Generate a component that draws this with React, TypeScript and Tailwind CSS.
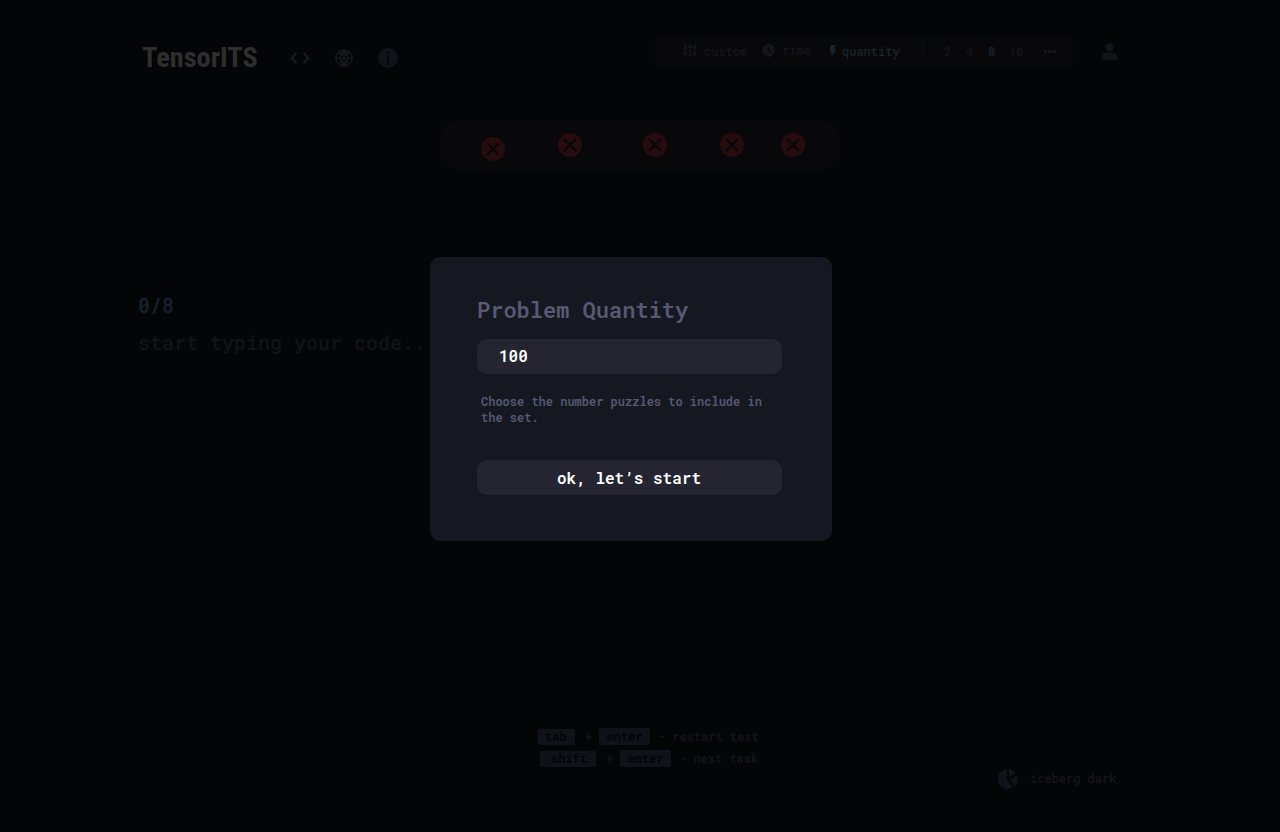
import React from "react";

const mono = "font-['Roboto_Mono','Liberation_Mono',monospace]";

function Key({ children, className }: { children: React.ReactNode; className: string }) {
  return <span className={`flex items-center justify-center rounded-[2px] bg-[#101219] text-[#030507] ${className}`}>{children}</span>;
}

function Wrong({ className }: { className: string }) {
  return (
    <svg className={`size-6 shrink-0 ${className}`} viewBox="0 0 24 24">
      <circle cx="12" cy="12" r="12" fill="#260c0f" />
      <path d="M6.5 6.5l11 11M17.5 6.5l-11 11" stroke="#070709" strokeWidth="2" strokeLinecap="round" />
    </svg>
  );
}

function Header() {
  return (
    <header className="flex h-[120px] shrink-0 items-start">
      <div className="ml-[142px] mt-[40px] h-9 w-[116px] shrink-0">
        <h1 className="w-max origin-left scale-x-[1.05] whitespace-nowrap font-['Roboto_Condensed','Roboto',sans-serif] text-[27px] font-bold leading-9 text-[#2e2e2e]">TensorITS</h1>
      </div>
      <svg className="ml-[32px] mt-[52px] h-3 w-5 shrink-0" viewBox="0 0 20 12" fill="none" stroke="#171a22" strokeWidth="2.1">
        <path d="M6.3 .8L1.5 6l4.8 5.2M13.7 .8L18.5 6l-4.8 5.2" />
      </svg>
      <svg className="ml-[25px] mt-[49px] size-[18px] shrink-0" viewBox="0 0 18 18" fill="none" stroke="#14171e" strokeWidth="1.7">
        <circle cx="9" cy="9" r="8.1" />
        <path d="M9 1v16M1 9h16M3.3 3.6Q9 7.8 14.7 3.6M3.3 14.4Q9 10.2 14.7 14.4M9 1C4.2 6 4.2 12 9 17M9 1c4.8 5 4.8 11 0 16" />
      </svg>
      <svg className="ml-[25px] mt-[48px] size-5 shrink-0" viewBox="0 0 20 20">
        <circle cx="10" cy="10" r="10" fill="#11131b" />
        <path d="M9 3.2h2.2v2.7H9zM8 8h3.2v8.7H9V9.8H8z" fill="#030507" />
      </svg>
      <nav className={`ml-[257px] mt-9 flex h-[31px] w-[418px] shrink-0 items-start rounded-[4px] bg-[#08080a] text-[12px] font-medium leading-[30px] text-[#14151b] ${mono}`}>
        <svg className="ml-7 mt-2 h-3 w-[14px] shrink-0" viewBox="0 0 14 12" stroke="#15161d" strokeWidth="1.8">
          <path d="M2.4 0v6.5M2.4 8.6V12M7 0v3M7 4.8V12M11.6 0v6.5M11.6 8.6V12M0 8.6h4.8M4.7 3.1h4.6M9.2 8.6H14" />
        </svg>
        <span className="ml-[7px] w-[44px]">custom</span>
        <svg className="ml-[14px] mt-2 size-[13px] shrink-0" viewBox="0 0 13 13">
          <circle cx="6.5" cy="6.5" r="6.5" fill="#14151b" />
          <path d="M6.5 2.5v4.3l3 1.5" fill="none" stroke="#08080a" strokeWidth="1.5" />
        </svg>
        <span className="-mt-px ml-[7px] w-[29px]">time</span>
        <svg className="ml-[17px] mt-2 h-[13px] w-[9px] shrink-0" viewBox="0 0 9 13">
          <path d="M3.2 1h4.3L5.9 4.4h2.3L6.5 8H7.6L2.8 13l1-4H1.9l1-3H1z" fill="#1a232c" />
        </svg>
        <span className="ml-[5px] w-[58px] text-[#1a232c]">quantity</span>
        <span className="ml-[26px] mt-[3px] h-[23px] w-[3px] rounded-full bg-[#030507]" />
        <span className="ml-[15px] w-[7px]">2</span>
        <span className="ml-[15px] w-[7px]">4</span>
        <span className="ml-[15px] w-[7px] font-semibold text-[#1a232c]">8</span>
        <span className="ml-[14px] w-[15px]">16</span>
        <svg className="ml-[20px] mt-[14px] h-[3px] w-[12px]" viewBox="0 0 12 3" fill="#16171d">
          <circle cx="1.5" cy="1.5" r="1.7" /><circle cx="6" cy="1.5" r="1.7" /><circle cx="10.5" cy="1.5" r="1.7" />
        </svg>
      </nav>
      <svg className="ml-[29px] mt-[43px] h-[17px] w-[15px] shrink-0" viewBox="0 0 15 17" fill="#11131b">
        <circle cx="7.5" cy="4.2" r="4.2" />
        <path d="M0 17v-2.5q0-5 5-5h5q5 0 5 5V17z" />
      </svg>
    </header>
  );
}

export default function App() {
  return (
    <div className="relative h-[832px] w-[1280px] overflow-hidden bg-[#030507]">
      <div className="flex h-full flex-col">
        <Header />
        <div className="ml-[440px] flex h-[50px] w-[400px] shrink-0 items-start rounded-[20px] bg-[#08080a] pt-[13px]">
          <Wrong className="ml-[41px] mt-1" />
          <Wrong className="ml-[53px]" />
          <Wrong className="ml-[61px]" />
          <Wrong className="ml-[53px]" />
          <Wrong className="ml-[37px]" />
        </div>
        <main className={`ml-[138px] mt-[118px] h-[422px] shrink-0 text-[20px] font-semibold text-[#111217] ${mono}`}>
          <p className="h-[37px] leading-[34px] text-[#17202a]">0/8</p>
          <p className="leading-[34px]">start typing your code...</p>
        </main>
        <footer className={`flex items-start text-[12px] font-bold text-[#121319] ${mono}`}>
          <div className="ml-[538px] mt-[18px] w-[230px] shrink-0">
            <div className="flex h-[22px] items-start leading-[17px]">
              <Key className="mt-px h-4 w-[37px] pb-px pr-px">tab</Key>
              <span className="ml-[10px] w-[7px]">+</span>
              <Key className="ml-[7px] h-[17px] w-[51px]">enter</Key>
              <span className="ml-[8px] whitespace-nowrap">- restart test</span>
            </div>
            <div className="flex items-start pl-[2px] leading-[17px]">
              <Key className="mt-px h-4 w-[56px] pb-px pl-0.5">shift</Key>
              <span className="ml-[10px] w-[7px]">+</span>
              <Key className="ml-[7px] h-[17px] w-[51px]">enter</Key>
              <span className="ml-[8px] whitespace-nowrap">- next task</span>
            </div>
          </div>
          <div className="ml-[230px] mt-[59px] flex items-center font-medium leading-5">
            <svg className="size-5" viewBox="0 0 20 20" fill="#11131b">
              <path d="M8.8 0v10.5l6.5 7.8A10 10 0 1 1 8.8 0zM11 0a10 10 0 0 1 6.5 4L11 8.5zM18.7 6a10 10 0 0 1-1.8 10.7L12.4 11z" />
            </svg>
            <span className="-mt-[2px] ml-[12px] whitespace-nowrap text-[#14151c]">iceberg dark</span>
          </div>
        </footer>
      </div>
      <section className={`absolute left-[430px] top-[257px] flex h-[284px] w-[402px] flex-col rounded-[10px] bg-[#161821] pl-[47px] font-semibold text-[#585974] ${mono}`}>
        <h2 className="mt-[37px] h-[45px] text-[22px] leading-[32px]">Problem Quantity</h2>
        <div className="h-[35px] w-[305px] shrink-0 rounded-[10px] bg-[#242530] pl-[22px] text-[16px] leading-[34px] text-white">100</div>
        <p className="ml-[4px] mt-[19px] h-[67px] w-[290px] text-[12px] leading-4">Choose the number puzzles to include in the set.</p>
        <button className="h-[35px] w-[305px] shrink-0 rounded-[10px] bg-[#242530] pb-px pr-px text-[16px] leading-[35px] text-white">ok, let’s start</button>
      </section>
    </div>
  );
}
